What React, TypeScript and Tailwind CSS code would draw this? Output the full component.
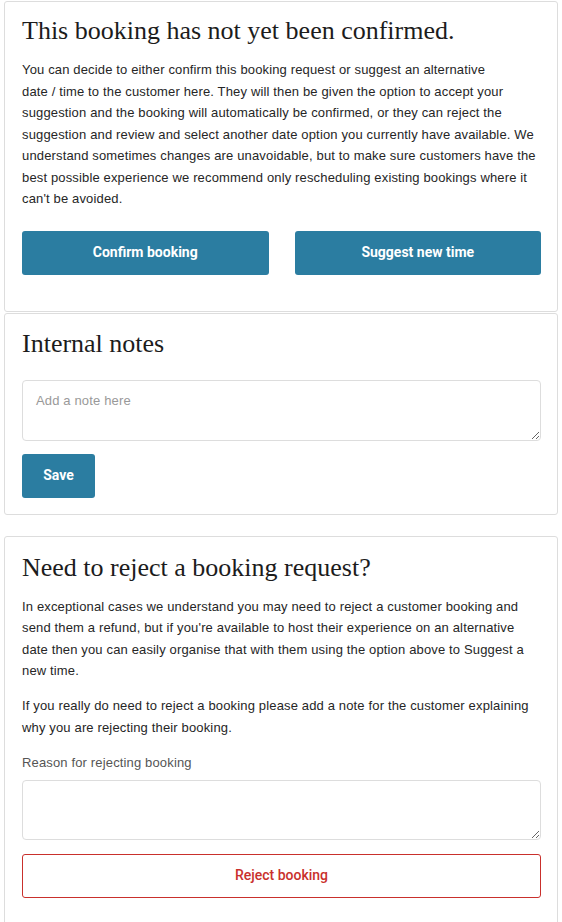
const serif = "font-['Liberation_Serif','DejaVu_Serif',serif]";

const Card = ({className = "", children}: {className?: string; children: React.ReactNode}) => (
    <div className={`mx-1 rounded-[3px] border border-[#dddddd] bg-white pl-[17px] pr-[16px] ${className}`}>
        {children}
    </div>
);

const Heading = ({children}: {children: React.ReactNode}) => (
    <h2 className={`${serif} text-[26px] leading-[32px] tracking-normal text-[#1c1c1c]`}>{children}</h2>
);

const blueBtn = "h-[44px] rounded-[3px] bg-[#2b7da1] font-['Roboto',sans-serif] text-[14px] font-bold tracking-normal text-white";

export default function App() {
    return (
        <div className="min-h-[922px] bg-white pt-px font-['Liberation_Sans',Arial,sans-serif] text-[13px] tracking-[0.15px] text-[#262626]">
            <Card className="pt-[13px] pb-[36px]">
                <Heading>This booking has not yet been confirmed.</Heading>
                <p className="mt-[12px] leading-[21.5px]">
                    You can decide to either confirm this booking request or suggest an alternative<br />
                    date / time to the customer here. They will then be given the option to accept your suggestion and the booking will automatically be confirmed, or they can reject the suggestion and review and select another date option you currently have available. We understand sometimes changes are unavoidable, but to make sure customers have the best possible experience we recommend only rescheduling existing bookings where it can't be avoided.
                </p>
                <div className="mt-[21px] grid grid-cols-2 gap-[26px]">
                    <button className={blueBtn}>Confirm booking</button>
                    <button className={blueBtn}>Suggest new time</button>
                </div>
            </Card>

            <Card className="mt-px pt-[14px] pb-[16px]">
                <Heading>Internal notes</Heading>
                <textarea
                    placeholder="Add a note here"
                    className="mt-[20px] block h-[61px] w-full rounded-[4px] border border-[#dddddd] px-[13px] py-[10px] text-[13px] placeholder:text-[#999]"
                />
                <button className={`${blueBtn} mt-[13px] w-[73px]`}>Save</button>
            </Card>

            <Card className="mt-[21px] pt-[15px] pb-[40px]">
                <Heading>Need to reject a booking request?</Heading>
                <p className="mt-[12px] leading-[21.5px]">
                    In exceptional cases we understand you may need to reject a customer booking and send them a refund, but if you're available to host their experience on an alternative date then you can easily organise that with them using the option above to Suggest a new time.
                </p>
                <p className="mt-[13.5px] leading-[21.5px]">
                    If you really do need to reject a booking please add a note for the customer explaining why you are rejecting their booking.
                </p>
                <label className="mt-[14px] block leading-[21.5px] text-[#555]">Reason for rejecting booking</label>
                <textarea className="mt-[6px] block h-[60px] w-full rounded-[4px] border border-[#dddddd] px-[13px] py-[10px]" />
                <button className="mt-[14px] h-[44px] w-full rounded-[3px] border border-[#c9302c] bg-white font-['Roboto',sans-serif] text-[14px] font-medium tracking-normal text-[#c9302c]">Reject booking</button>
            </Card>
        </div>
    );
}
